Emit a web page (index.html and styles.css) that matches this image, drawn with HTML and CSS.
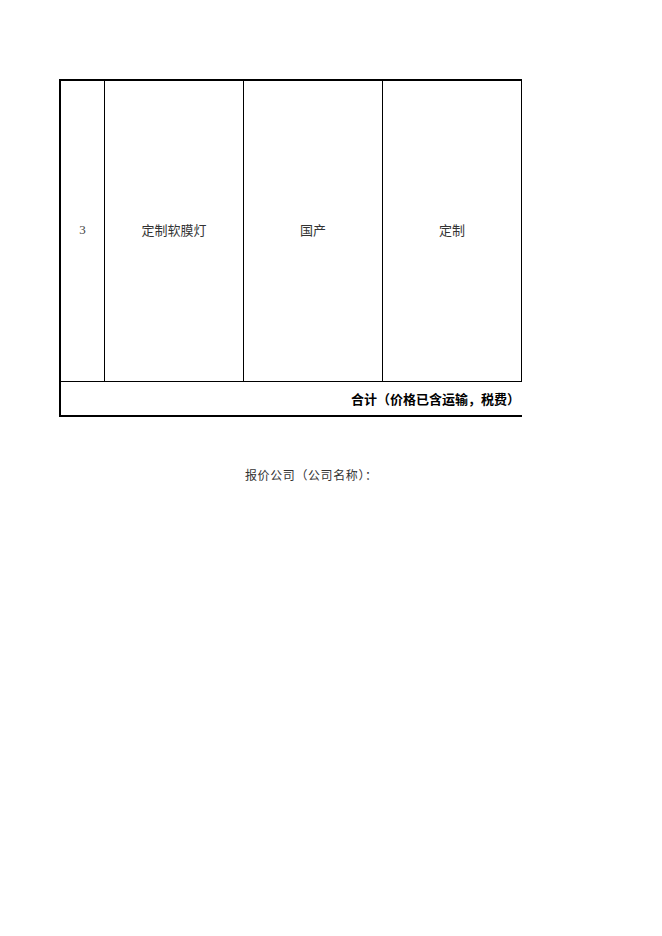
FILE: index.html
```html
<!DOCTYPE html>
<html lang="zh-CN">
<head>
<meta charset="utf-8">
<title>报价单</title>
<link rel="stylesheet" href="styles.css">
</head>
<body>
<div class="sheet">
  <div class="table">
    <div class="row item">
      <div class="cell num">3</div>
      <div class="cell">定制软膜灯</div>
      <div class="cell">国产</div>
      <div class="cell last">定制</div>
    </div>
    <div class="row total">
      <div class="total-text">合计（价格已含运输，税费）</div>
    </div>
  </div>
  <div class="company">报价公司（公司名称）：</div>
</div>
</body>
</html>
```
FILE: styles.css
```css
html, body {
  margin: 0;
  padding: 0;
  background: #fff;
}
body {
  width: 662px;
  height: 936px;
  overflow: hidden;
  font-family: "Noto Sans CJK SC", "Liberation Sans", sans-serif;
  color: #333;
}
.sheet {
  padding: 79px 0 0 59px;
}
.table {
  width: 463px;
  box-sizing: border-box;
  border-top: 2px solid #000;
  border-left: 2px solid #000;
}
.row.item {
  display: grid;
  grid-template-columns: 44px 139px 139px 139px;
  height: 301px;
}
.cell {
  box-sizing: border-box;
  border-right: 1px solid #000;
  border-bottom: 1px solid #000;
  display: flex;
  align-items: center;
  justify-content: center;
  font-size: 13px;
  line-height: 1;
  padding-bottom: 4px;
}
.cell.num {
  font-family: "Liberation Serif", "Noto Sans CJK SC", serif;
  font-size: 13px;
  color: #444;
}
.row.total {
  height: 35px;
  box-sizing: border-box;
  border-bottom: 2px solid #000;
  display: flex;
  align-items: center;
  justify-content: flex-end;
  padding-right: 2px;
}
.total-text {
  font-size: 13px;
  font-weight: bold;
  color: #000;
  line-height: 1;
}
.company {
  margin-top: 50px;
  padding-left: 186px;
  font-size: 12px;
  line-height: 16px;
  letter-spacing: 0.6px;
  color: #333;
}
```
